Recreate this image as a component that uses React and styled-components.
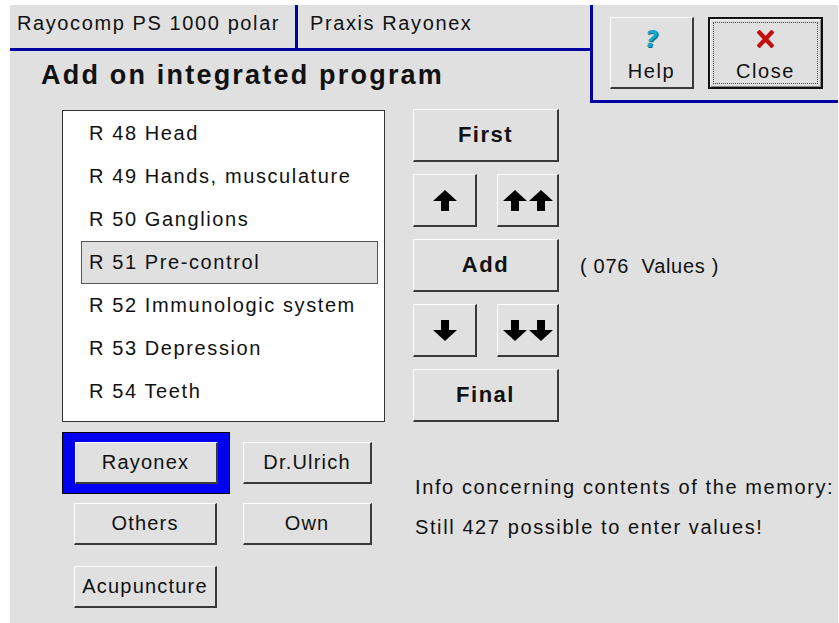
import React from 'react';
import styled, { createGlobalStyle, css } from 'styled-components';

const NAVY = '#0000a0';

const GlobalStyle = createGlobalStyle`
  html, body {
    margin: 0;
    background: #fff;
  }
`;

const Window = styled.div`
  margin: 5px 1px 0 10px;
  min-height: 618px;
  background: #e0e0e0;
  font-family: "Liberation Sans", Arial, sans-serif;
  font-size: 20px;
  letter-spacing: 1.6px;
  color: #111;
`;

const Header = styled.div`
  display: flex;
  height: 97px;
`;

const HeadLeft = styled.div`
  width: 580px;
  display: flex;
  flex-direction: column;
`;

const Tabs = styled.div`
  display: flex;
  height: 43px;
  border-bottom: 3px solid ${NAVY};
`;

const Tab = styled.div`
  width: ${p => p.$w}px;
  padding: 6px 0 0 ${p => p.$pad}px;
  line-height: 24px;
  box-sizing: border-box;
  white-space: nowrap;
  ${p => p.$divider && css`border-right: 3px solid ${NAVY};`}
`;

const Title = styled.h1`
  margin: 8px 0 0 31px;
  font-size: 27px;
  line-height: 32px;
  font-weight: bold;
  letter-spacing: 2.2px;
  white-space: nowrap;
`;

const HeadRight = styled.div`
  flex: 1;
  box-sizing: border-box;
  height: 98px;
  border-left: 3px solid ${NAVY};
  border-bottom: 3px solid ${NAVY};
  display: flex;
  gap: 14px;
  padding: 12px 0 0 17px;
`;

const raised = css`
  background: #e0e0e0;
  box-sizing: border-box;
  border-style: solid;
  border-width: 1px 2px 2px 1px;
  border-color: #fff #3a3a3a #3a3a3a #fff;
  font-family: inherit;
  color: #111;
  letter-spacing: 1.6px;
  padding: 0;
`;

const ToolButton = styled.button`
  ${raised}
  position: relative;
  width: ${p => p.$w}px;
  height: 72px;
  display: flex;
  flex-direction: column;
  align-items: center;
  font-size: 20px;
  line-height: 22px;
  padding-top: 10px;
  gap: 10px;
  ${p => p.$focused && css`
    border: 2px solid #111;
    box-shadow: inset 1px 1px 0 #fff, inset -1px -1px 0 #888;
    padding-top: 9px;
    &::after {
      content: '';
      position: absolute;
      inset: 3px;
      border: 1px dotted #444;
    }
  `}
`;

const IconSlot = styled.span`
  height: 22px;
  display: flex;
  align-items: center;
  justify-content: center;
`;

const QuestionMark = styled.span`
  font-family: "DejaVu Sans", sans-serif;
  font-size: 23px;
  font-weight: bold;
  font-style: italic;
  color: #19a6cc;
  line-height: 22px;
  letter-spacing: 0;
  text-shadow: 1px 1px 0 #0b6a86;
`;

const Body = styled.div`
  padding: 8px 0 0 52px;
`;

const MainRow = styled.div`
  display: flex;
  align-items: flex-start;
`;

const List = styled.div`
  width: 323px;
  height: 312px;
  box-sizing: border-box;
  border: 1px solid #333;
  background: #fff;
  padding: 1px 6px 0 18px;
`;

const Row = styled.div`
  height: 43px;
  box-sizing: border-box;
  display: flex;
  align-items: center;
  padding-left: 7px;
  border: 1px solid ${p => (p.$selected ? '#555' : 'transparent')};
  background: ${p => (p.$selected ? '#e0e0e0' : 'transparent')};
  white-space: nowrap;
`;

const Nav = styled.div`
  width: 146px;
  margin: -1px 0 0 28px;
  display: flex;
  flex-direction: column;
  gap: 12px;
`;

const NavPair = styled.div`
  display: flex;
  justify-content: space-between;
`;

const NavButton = styled.button`
  ${raised}
  width: ${p => p.$w || 146}px;
  height: 53px;
  display: flex;
  align-items: center;
  justify-content: center;
  font-size: 22px;
  font-weight: bold;
  letter-spacing: 1.5px;
`;

const Values = styled.div`
  align-self: center;
  margin-left: 21px;
  white-space: pre;
  letter-spacing: 0.7px;
`;

const Bottom = styled.div`
  display: flex;
  margin-top: 10px;
`;

const Choices = styled.div`
  width: 310px;
  display: flex;
  flex-direction: column;
`;

const ChoiceRow = styled.div`
  display: flex;
  align-items: center;
  margin-top: ${p => p.$top || 0}px;
`;

const FocusFrame = styled.div`
  width: 168px;
  height: 62px;
  box-sizing: border-box;
  border: 1px solid #000;
  background: #0000f2;
  display: flex;
  align-items: center;
  justify-content: center;
`;

const ChoiceButton = styled.button`
  ${raised}
  width: ${p => p.$w}px;
  height: 42px;
  margin-left: ${p => p.$left || 0}px;
  font-size: 20px;
  letter-spacing: 1.2px;
  white-space: nowrap;
`;

const Info = styled.div`
  margin-left: 43px;
  padding-top: 35px;
  line-height: 40px;
  white-space: nowrap;
`;

const ARROW = '12,0 24,11 16,11 16,21 8,21 8,11 0,11';

const Arrow = ({ down }) => (
  <svg width="24" height="21" viewBox="0 0 24 21" style={down ? { transform: 'scaleY(-1)' } : undefined}>
    <polygon points={ARROW} fill="#000" />
  </svg>
);

const DoubleArrow = ({ down }) => (
  <svg width="50" height="21" viewBox="0 0 50 21" style={down ? { transform: 'scaleY(-1)' } : undefined}>
    <polygon points={ARROW} fill="#000" />
    <polygon points={ARROW} fill="#000" transform="translate(26 0)" />
  </svg>
);

const CloseIcon = () => (
  <svg width="17" height="18" viewBox="0 0 17 18">
    <path d="M2.5 2.5 L14.5 15.5 M14.5 2.5 L2.5 15.5" stroke="#c40f0f" strokeWidth="4.2" strokeLinecap="square" />
  </svg>
);

const programs = [
  'R 48 Head',
  'R 49 Hands, musculature',
  'R 50 Ganglions',
  'R 51 Pre-control',
  'R 52 Immunologic system',
  'R 53 Depression',
  'R 54 Teeth',
];

export default function App() {
  const selected = 3;
  return (
    <>
      <GlobalStyle />
      <Window>
        <Header>
          <HeadLeft>
            <Tabs>
              <Tab $w={288} $pad={7} $divider>Rayocomp PS 1000 polar</Tab>
              <Tab $w={292} $pad={12}>Praxis Rayonex</Tab>
            </Tabs>
            <Title>Add on integrated program</Title>
          </HeadLeft>
          <HeadRight>
            <ToolButton $w={84}>
              <IconSlot><QuestionMark>?</QuestionMark></IconSlot>
              Help
            </ToolButton>
            <ToolButton $w={115} $focused>
              <IconSlot><CloseIcon /></IconSlot>
              Close
            </ToolButton>
          </HeadRight>
        </Header>

        <Body>
          <MainRow>
            <List>
              {programs.map((p, i) => (
                <Row key={p} $selected={i === selected}>{p}</Row>
              ))}
            </List>
            <Nav>
              <NavButton>First</NavButton>
              <NavPair>
                <NavButton $w={64}><Arrow /></NavButton>
                <NavButton $w={62}><DoubleArrow /></NavButton>
              </NavPair>
              <NavButton>Add</NavButton>
              <NavPair>
                <NavButton $w={64}><Arrow down /></NavButton>
                <NavButton $w={62}><DoubleArrow down /></NavButton>
              </NavPair>
              <NavButton>Final</NavButton>
            </Nav>
            <Values>{'( 076  Values )'}</Values>
          </MainRow>

          <Bottom>
            <Choices>
              <ChoiceRow>
                <FocusFrame>
                  <ChoiceButton $w={143}>Rayonex</ChoiceButton>
                </FocusFrame>
                <ChoiceButton $w={129} $left={13}>Dr.Ulrich</ChoiceButton>
              </ChoiceRow>
              <ChoiceRow $top={9}>
                <ChoiceButton $w={143} $left={12}>Others</ChoiceButton>
                <ChoiceButton $w={129} $left={26}>Own</ChoiceButton>
              </ChoiceRow>
              <ChoiceRow $top={21}>
                <ChoiceButton $w={143} $left={12}>Acupuncture</ChoiceButton>
              </ChoiceRow>
            </Choices>
            <Info>
              <div>Info concerning contents of the memory:</div>
              <div>Still 427 possible to enter values!</div>
            </Info>
          </Bottom>
        </Body>
      </Window>
    </>
  );
}
